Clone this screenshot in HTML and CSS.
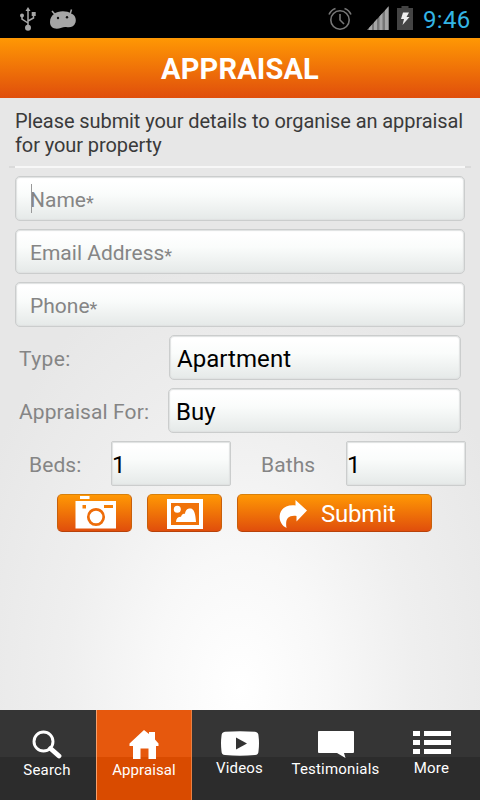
FILE: index.html
```html
<!DOCTYPE html>
<html lang="en">
<head>
    <meta charset="UTF-8">
    <title>Appraisal</title>
    <link rel="stylesheet" href="styles.css">
</head>
<body>
<div class="status-bar">
    <svg class="usb" width="16" height="24" viewBox="0 0 16 24" fill="none" stroke="#a6a6a6" stroke-width="1.500">
        <path d="M8 3v16M2 9v3l6 4M13.500 7v4L8 14"/>
        <path d="M8 0l2.500 4h-5z" fill="#a6a6a6" stroke="none"/>
        <circle cx="8" cy="20.800" r="3" fill="#a6a6a6" stroke="none"/>
        <circle cx="2" cy="8.500" r="2" fill="#a6a6a6" stroke="none"/>
        <path d="M11.700 5h4v4h-4z" fill="#a6a6a6" stroke="none"/>
    </svg>
    <svg class="android" width="26" height="20" viewBox="0 0 26 20">
        <path d="M2 2l3.500 4M21.500 .5l-1.500 5" stroke="#a6a6a6" stroke-width="1.500" fill="none"/>
        <path d="M4 5C8 1.500 17 1.500 21 4.500c4 1 5.500 5 4.500 9-1.500 4.500-5.500 5.500-9.500 4.500-1.500-.3-3 .2-4.500.8C5 21 0 19 0 13 0 9.500 1.500 7 4 5z" fill="#a6a6a6"/>
        <circle cx="8" cy="9" r="1.200" fill="#111"/>
        <circle cx="17" cy="8.300" r="1.200" fill="#111"/>
    </svg>
    <span class="space"></span>
    <svg class="alarm" width="24" height="24" viewBox="0 0 24 24" fill="none" stroke="#777" stroke-width="1.600">
        <circle cx="12" cy="13" r="9.200"/>
        <path d="M12 7v6l4 4M1 7.500Q3 3 7.500 1.500M16.500 1.500Q21 3 23 7.500"/>
    </svg>
    <svg class="signal" width="22" height="24" viewBox="0 0 22 24">
        <path d="M0 24L22 0v24z" fill="#777"/>
        <path d="M2 24v-2l3-3.300V24zM7 24v-7.600l3-3.300V24zM12.500 24V10.400l3-3.300V24zM18 24V4.400l3-3.300V24z" fill="#a6a6a6"/>
    </svg>
    <svg class="battery" width="16" height="24" viewBox="0 0 16 24">
        <path d="M4.500 0h7v2H16v22H0V2h4.500z" fill="#444"/>
        <path d="M6 6.500h6L9.500 11h3L5.500 19l1.500-6H4z" fill="#eee"/>
    </svg>
    <span class="clock">9:46</span>
</div>

<div class="header">APPRAISAL</div>

<div class="content">
    <p class="intro">Please submit your details to organise an appraisal<br>for your property</p>
    <div class="divider"></div>

    <div class="field name"><span class="cursor"></span>Name<span class="star">*</span></div>
    <div class="field email">Email Address<span class="star">*</span></div>
    <div class="field phone">Phone<span class="star">*</span></div>
    <div class="row">
        <label class="type-label">Type:</label>
        <div class="select type-select">Apartment</div>
    </div>
    <div class="row">
        <label class="for-label">Appraisal For:</label>
        <div class="select for-select">Buy</div>
    </div>
    <div class="row rooms">
        <label class="beds-label">Beds:</label>
        <div class="number">1</div>
        <label class="baths-label">Baths</label>
        <div class="number">1</div>
    </div>

    <div class="buttons">
        <div class="button">
            <svg class="camera" width="42" height="34" viewBox="0 0 42 34">
                <path d="M5 1h9.500v3H5zM.5 6h40.500v27.500H.5z" fill="#fff"/>
                <path d="M7.500 10H11v3.500H7.500zM29 10h9v3h-9z" fill="#f57f07"/>
                <circle cx="21" cy="22" r="7.700" fill="none" stroke="#ee6c09" stroke-width="2.700"/>
            </svg>
        </div>
        <div class="button">
            <svg class="picture" width="36" height="30" viewBox="0 0 36 30">
                <path d="M0 0h36v30H0z" fill="#fff"/>
                <path d="M4 4h28v22H4z" fill="#f07209"/>
                <circle cx="10.300" cy="10.300" r="3.500" fill="#fff"/>
                <path d="M9 23c0-3.500 2-5.200 5-5.200 1-2.800 2-3 4-3 .5-4 3-5.200 5-5.200 4.500 0 5.500 6 6 13.400z" fill="#fff"/>
            </svg>
        </div>
        <div class="button submit">
            <svg class="arrow" width="28" height="28" viewBox="0 0 28 28">
                <path d="M16.500 0L28 10.500 17.500 21.500V16C9 15 6 19 7.500 28 3 26 0 21 .7 15.500 1.500 8 8 4.500 16.500 5.500z" fill="#fff"/>
            </svg>
            <span>Submit</span>
        </div>
    </div>
</div>

<div class="nav">
    <div class="tab search">
        <svg width="30" height="30" viewBox="0 0 30 30" fill="none" stroke="#fff">
            <circle cx="11.500" cy="11.500" r="9.500" stroke-width="2.900"/>
            <path d="M18.500 18.500L27 26" stroke-width="4.800" stroke-linecap="round"/>
        </svg>
        <span>Search</span>
    </div>
    <div class="tab active">
        <svg width="30" height="29" viewBox="0 0 30 29">
            <path d="M15 0l5 4V2h6v7.500l3.500 4v2.500H27v13h-7.500V18.500h-8V29H4V16H.5v-2.500z" fill="#fff"/>
        </svg>
        <span>Appraisal</span>
    </div>
    <div class="tab videos">
        <svg width="38" height="25" viewBox="0 0 38 25">
            <path d="M4 .8Q19-.5 34 .8q3.500.4 3.500 4 1 7.500 0 15.500 0 3.400-3.500 3.800-15 1.300-30 0Q.5 23.700.5 20.300-.5 12.300.5 4.800.5 1.200 4 .8z" fill="#fff"/>
            <path d="M15 6.500l11 6-11 6z" fill="#333"/>
        </svg>
        <span>Videos</span>
    </div>
    <div class="tab testimonials">
        <svg width="36" height="27" viewBox="0 0 36 27">
            <path d="M1 0h34q1 0 1 1v20q0 1-1 1h-9l1.500 5L19 22H1q-1 0-1-1V1q0-1 1-1z" fill="#fff"/>
        </svg>
        <span>Testimonials</span>
    </div>
    <div class="tab more">
        <svg width="38" height="23" viewBox="0 0 38 23">
            <path d="M0 0h7v5H0zM11 0h27v5H11zM0 9h7v5H0zM11 9h27v5H11zM0 18h7v5H0zM11 18h27v5H11z" fill="#fff"/>
        </svg>
        <span>More</span>
    </div>
</div>
</body>
</html>
```

FILE: styles.css
```css
* {box-sizing: border-box;}
body {margin: 0; width: 480px; height: 800px; overflow: hidden; display: flex; flex-direction: column;
    font-family: Roboto, "Liberation Sans", sans-serif;}
svg {display: block; flex: none;}

/* status bar */
.status-bar {height: 38px; flex: none; display: flex; background: #000; padding: 0 10px 0 20px;}
.usb {margin-top: 7px;}
.android {margin: 9px 0 0 14px;}
.space {flex: 1;}
.alarm {margin: 7px 15px 0 0;}
.signal {margin: 6px 8px 0 0;}
.battery {margin: 6px 10px 0 0;}
.clock {color: #33b5e5; font-size: 24px; line-height: 40px; width: 47px; white-space: nowrap; letter-spacing: 0.3px;}

.header {height: 60px; flex: none; background: linear-gradient(#ff9804, #e04e0c); color: #fff; text-align: center;
    font-size: 29px; font-weight: bold; line-height: 62px; letter-spacing: 0.15px;}

/* form */
.content {height: 612px; flex: none; padding: 11px 15px 0;
    background: radial-gradient(ellipse 290px 440px at 240px 590px, #fff 0%, #f8f8f8 30%, #efefef 60%, #e7e7e7 100%);}
.intro {margin: 0; height: 57px; font-size: 20px; line-height: 24px; color: #3a3a3a; letter-spacing: -0.08px; white-space: nowrap;}
.divider {height: 2px; margin: 0 -6px 8px; background: linear-gradient(90deg, #dadada 6px, #f7f7f7 6px, #f7f7f7 456px, #dadada 456px);}
.field, .select, .number {height: 45px; margin-bottom: 8px; border: 1px solid #cbcdcd; border-radius: 5px;
    background: linear-gradient(#fff 10%, #fafcfb 40%, #e5e9e8); box-shadow: inset 0 0 1px 1px #dfe1e1; white-space: nowrap;}
.field {padding-left: 14px; font-size: 21px; line-height: 46px; color: #858585; letter-spacing: 0; position: relative;}
.star {display: inline-block; font-size: 18px; line-height: 20px; padding-top: 3px; vertical-align: middle;}
.cursor {position: absolute; left: 15px; top: 7px; width: 1px; height: 29px; background: #999;}
.row {display: flex; height: 53px;}
.row label {font-size: 21px; line-height: 48px; color: #858585; letter-spacing: 0.1px; padding-left: 4px; white-space: nowrap;}
.select {font-size: 24px; line-height: 46px; color: #000; padding-left: 7px; letter-spacing: 0.05px;}
.row .type-label {width: 154px; letter-spacing: 0.4px;}
.type-select {width: 292px;}
.for-label {width: 153px;}
.for-select {width: 293px;}
.rooms {margin-right: -5px;}
.row .beds-label {width: 96px; padding-left: 14px;}
.row .baths-label {width: 115px; padding-left: 30px;}
.number {width: 120px; flex: none; border-radius: 2px; font-size: 24px; line-height: 46px;}

/* buttons */
.buttons {display: flex; gap: 15px; padding-left: 42px;}
.button {width: 75px; height: 38px; border-radius: 5px; background: linear-gradient(#ff9804, #e04e0c);
    border: 1px solid; border-color: #d8800a #c7600c #b8420a; color: #fff;}
.camera {margin: 0 0 0 17px;}
.picture {margin: 4px 0 0 19px;}
.submit {width: 195px; display: flex; font-size: 24px; line-height: 39px; letter-spacing: -0.2px;}
.arrow {margin: 5px 14px 0 41px;}

/* bottom tabs */
.nav {display: flex; height: 90px; flex: none; background: linear-gradient(#353535 47px, #2c2c2c 47px);}
.tab {width: 96px; display: flex; flex-direction: column; align-items: center; color: #fff; font-size: 15px;
    line-height: 18px; letter-spacing: 0.2px; padding-top: 20px;}
.tab span {margin-top: auto; margin-bottom: 21px; white-space: nowrap;}
.search span {margin-right: 2px;}
.search svg {margin-right: 2px;}
.active {background: linear-gradient(#e6580d 47px, #d94b00 47px); border-left: 1px solid #f4a06c; border-right: 1px solid #e98042;}
.active span {letter-spacing: 0.1px;}
.videos, .testimonials, .more {padding-top: 21px;}
.videos span, .more span {margin-right: 1px; margin-bottom: 23px;}
.testimonials span {margin-right: 1px; margin-bottom: 22px;}
```
